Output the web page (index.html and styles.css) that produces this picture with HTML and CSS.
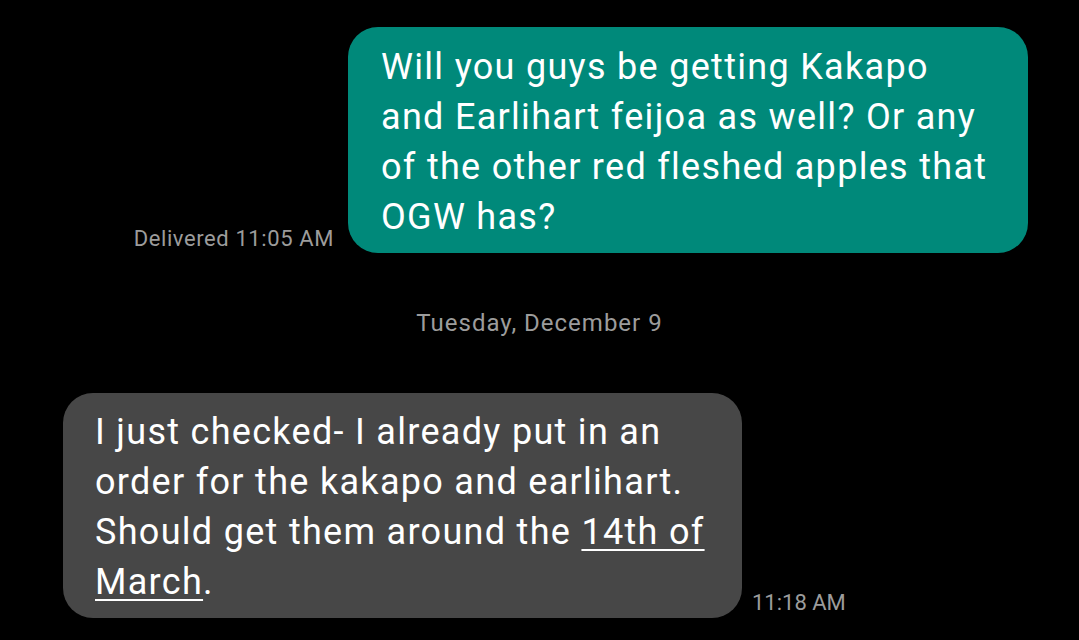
FILE: index.html
```html
<!DOCTYPE html>
<html>
<head>
<meta charset="utf-8">
<link rel="stylesheet" href="styles.css">
</head>
<body>
<div class="thread">
  <div class="row row-out">
    <span class="meta meta-delivered">Delivered 11:05 AM</span>
    <div class="bubble bubble-out">Will you guys be getting Kakapo<br>and Earlihart feijoa as well? Or any<br>of the other red fleshed apples that<br>OGW has?</div>
  </div>
  <div class="date">Tuesday, December 9</div>
  <div class="row row-in">
    <div class="bubble bubble-in">I just checked- I already put in an<br>order for the kakapo and earlihart.<br>Should get them around the <span class="link">14th of<br>March</span>.</div>
    <span class="meta meta-time">11:18 AM</span>
  </div>
</div>
</body>
</html>
```
FILE: styles.css
```css
html, body {
  margin: 0;
  padding: 0;
  background: #000;
}
body {
  width: 1079px;
  height: 640px;
  overflow: hidden;
  font-family: Roboto, "Noto Sans", sans-serif;
  color: #fff;
}
.thread {
  display: flex;
  flex-direction: column;
  padding-top: 27px;
}
.row {
  display: flex;
  align-items: flex-end;
}
.row-out {
  justify-content: flex-end;
  padding-right: 51px;
  gap: 14px;
}
.row-in {
  justify-content: flex-start;
  padding-left: 63px;
  gap: 10px;
  margin-top: 55px;
}
.bubble {
  box-sizing: border-box;
  font-size: 36px;
  letter-spacing: 1.3px;
  line-height: 50px;
  border-radius: 30px;
  white-space: nowrap;
}
.bubble-out {
  width: 680px;
  background: #00897a;
  padding: 15px 10px 11px 33px;
}
.bubble-in {
  width: 679px;
  background: #474747;
  padding: 14px 10px 11px 32px;
}
.link {
  text-decoration: underline;
  text-decoration-thickness: 2px;
  text-underline-offset: 5px;
}
.meta {
  font-size: 22px;
  letter-spacing: 0.6px;
  line-height: 28px;
  color: #9c9c9c;
  white-space: nowrap;
}
.meta-delivered {
  margin-bottom: 0px;
}
.meta-time {
  margin-bottom: 1px;
  letter-spacing: 0;
}
.date {
  text-align: center;
  font-size: 24px;
  letter-spacing: 1px;
  line-height: 30px;
  color: #9c9c9c;
  margin-top: 55px;
}
```
